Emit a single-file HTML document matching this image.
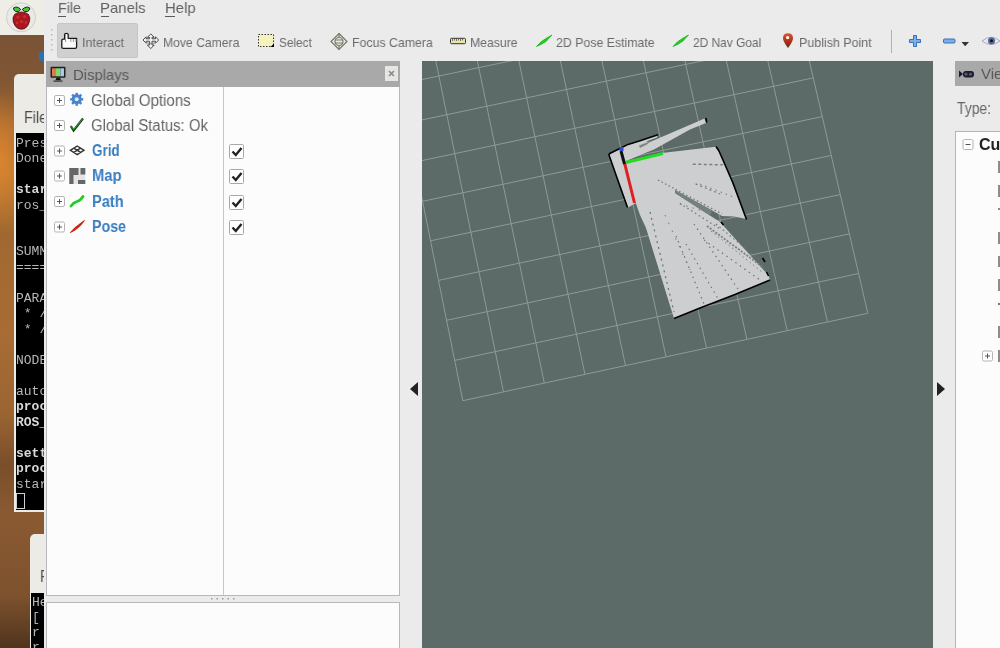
<!DOCTYPE html>
<html><head><meta charset="utf-8"><style>
*{margin:0;padding:0;box-sizing:border-box}
html,body{width:1000px;height:648px;overflow:hidden;background:#ececea;font-family:"Liberation Sans",sans-serif}
.a{position:absolute}
.t{position:absolute;white-space:nowrap;line-height:1;transform-origin:0 0;will-change:transform}
.m{position:absolute;will-change:transform;left:16px;font-family:"Liberation Mono",monospace;font-size:13px;line-height:14px;color:#b8b8b8;white-space:nowrap}
</style></head><body>
<!-- desktop -->
<div class="a" style="left:0;top:0;width:44px;height:35px;background:#eeede6"></div>
<div class="a" style="left:0;top:35px;width:44px;height:613px;background:linear-gradient(180deg,#7a5436 0px,#805634 45px,#a86a30 95px,#b87630 140px,#a06830 200px,#a86c34 300px,#9a6432 380px,#7a4e2a 430px,#8a5a32 480px,#7e522e 560px,#50341e 613px)"></div>
<div class="a" style="left:0;top:90px;width:30px;height:140px;background:radial-gradient(ellipse at 0% 50%,rgba(235,140,45,.7),rgba(235,140,45,0) 70%)"></div>
<svg class="a" style="left:0;top:0" width="44" height="35">
<circle cx="21" cy="17.3" r="14.5" fill="#e9e9e5" stroke="#cfcfd4" stroke-width="1"/>
<path d="M13.5 8 Q17 5.5 20.8 9.5 Q19 12.5 15.5 11.5 Q13.5 10.5 13.5 8 Z" fill="#4cc040" stroke="#1a3010" stroke-width="1"/>
<path d="M29.8 8 Q26.5 5.5 22.2 9.5 Q24 12.5 27.5 11.5 Q29.8 10.5 29.8 8 Z" fill="#4cc040" stroke="#1a3010" stroke-width="1"/>
<path d="M21.5 12 Q26 12 28.5 14.5 Q30.5 17.5 29.5 21.5 Q28 26.5 25 28.5 Q21.5 30 18 28.5 Q14.5 26.5 13.2 21.5 Q12.5 17 14.5 14.5 Q17 12 21.5 12 Z" fill="#a81820" stroke="#5a0a10" stroke-width="0.8"/>
<g fill="#d02a2a"><circle cx="18" cy="17" r="1.6"/><circle cx="24.5" cy="16.5" r="1.6"/><circle cx="21.5" cy="21.5" r="1.6"/><circle cx="17" cy="23" r="1.3"/><circle cx="26" cy="22.5" r="1.3"/></g>
</svg>
<div class="a" style="left:39px;top:52px;width:5px;height:9px;background:#2a70b8;border-radius:2px 0 0 2px"></div>
<!-- terminal 1 -->
<div class="a" style="left:14px;top:74px;width:30px;height:438px;background:#ecebe6;border-radius:5px 0 0 0"></div>
<div class="t" style="left:24.4px;top:108.5px;font-size:16.5px;color:#4a4a4a;transform:scaleX(0.8649);">File</div>
<div class="a" style="left:16px;top:133px;width:28px;height:377px;background:#000;overflow:hidden">
</div>
<div class="m" style="top:136.5px;">Pres</div>
<div class="m" style="top:152.0px;">Done</div>
<div class="m" style="top:183.0px;font-weight:bold;color:#d8d8d8;">star</div>
<div class="m" style="top:198.5px;">ros_</div>
<div class="m" style="top:245.0px;">SUMM</div>
<div class="m" style="top:260.5px;">====</div>
<div class="m" style="top:291.5px;">PARA</div>
<div class="m" style="top:307.0px;">&nbsp;*&nbsp;/</div>
<div class="m" style="top:322.5px;">&nbsp;*&nbsp;/</div>
<div class="m" style="top:353.5px;">NODE</div>
<div class="m" style="top:384.5px;">auto</div>
<div class="m" style="top:400.0px;font-weight:bold;color:#d8d8d8;">proc</div>
<div class="m" style="top:415.5px;font-weight:bold;color:#d8d8d8;">ROS_</div>
<div class="m" style="top:446.5px;font-weight:bold;color:#d8d8d8;">sett</div>
<div class="m" style="top:462.0px;font-weight:bold;color:#d8d8d8;">proc</div>
<div class="m" style="top:477.5px;">star</div>
<div class="a" style="left:16px;top:493px;width:9px;height:16px;border:1px solid #d0d0d0"></div>
<!-- terminal 2 -->
<div class="a" style="left:30px;top:534px;width:14px;height:114px;background:#ecebe6;border-radius:5px 0 0 0"></div>
<div class="t" style="left:39.8px;top:568.2px;font-size:16.5px;color:#4a4a4a;transform:scaleX(0.8434);">F</div>
<div class="a" style="left:31px;top:593px;width:13px;height:55px;background:#000"></div>
<div class="m" style="left:32px;top:596px">He</div>
<div class="m" style="left:32px;top:611px;color:#b0b0c0">[</div>
<div class="m" style="left:32px;top:626px">r</div>
<div class="m" style="left:32px;top:641px">r</div>

<!-- rviz window -->
<div class="a" style="left:44px;top:0;width:956px;height:648px;background:#ebebeb"></div>
<!-- underlines -->
<div class="a" style="left:58px;top:15.5px;width:8px;height:1px;background:#5a5a5a"></div>
<div class="a" style="left:100.5px;top:15.5px;width:8px;height:1px;background:#5a5a5a"></div>
<div class="a" style="left:165px;top:15.5px;width:10px;height:1px;background:#5a5a5a"></div>
<!-- toolbar grip -->
<svg class="a" style="left:48px;top:26px" width="8" height="30"><g fill="#b8b8c0"><rect x="3" y="3" width="1.5" height="1.5"/><rect x="3" y="8" width="1.5" height="1.5"/><rect x="3" y="13" width="1.5" height="1.5"/><rect x="3" y="18" width="1.5" height="1.5"/><rect x="3" y="23" width="1.5" height="1.5"/></g></svg>
<div class="a" style="left:57px;top:23px;width:81px;height:35px;background:#d0d0d1;border:1px solid #c6c6c8;border-radius:2px"></div>
<div class="a" style="left:891px;top:30px;width:1px;height:23px;background:#b0b0b0"></div>

<!-- displays panel -->
<div class="a" style="left:46px;top:61px;width:354px;height:26px;background:#a9a9a9"></div>
<div class="a" style="left:385px;top:66px;width:13px;height:15px;background:#e4e4e0"></div>
<div class="a" style="left:46px;top:87px;width:354px;height:509px;background:#fcfcfc;border:1px solid #b8b8bc;border-top:none"></div>
<div class="a" style="left:223px;top:87px;width:1px;height:508px;background:#c8c8c8"></div>
<div class="a" style="left:46px;top:602px;width:354px;height:46px;background:#fcfcfc;border:1px solid #b8b8bc;border-bottom:none"></div>

<!-- 3D view -->
<svg class="a" style="left:422px;top:61px" width="511" height="587">
<rect width="511" height="587" fill="#5c6a68"/>
<path d="M40.8 339.7L445.8 252.3M32.6 299.4L436.6 212.5M24.6 259.3L427.4 172.9M16.5 219.4L418.3 133.6M8.5 179.8L409.2 94.5M0.6 140.3L400.2 55.6M-7.3 101.1L391.3 16.9M-15.2 62.1L382.4 -21.6M-23.0 23.4L373.5 -59.9M-30.8 -15.2L364.7 -97.9M-38.5 -53.5L355.9 -135.7M40.8 339.7L-38.5 -53.5M81.5 330.9L1.2 -61.8M122.3 322.1L40.8 -70.1M162.9 313.3L80.4 -78.3M203.5 304.6L119.9 -86.6M244.0 295.8L159.4 -94.8M284.5 287.1L198.8 -103.0M324.9 278.4L238.2 -111.2M365.2 269.6L277.5 -119.4M405.5 260.9L316.7 -127.6M445.8 252.3L355.9 -135.7" stroke="#8f9998" stroke-width="1" fill="none"/>
<polygon points="186.8,93.0 198.8,87.0 206.0,83.4 218.0,79.8 236.0,73.8 235.0,76.5 224.0,80.5 228.0,81.0 278.0,59.5 282.4,57.4 284.0,62.0 268.0,68.5 232.0,88.5 222.0,92.5 203.6,100.2 204.0,102.0 214.0,142.0 206.0,146.5 194.0,114.0 188.0,96.0" fill="#cdcecf"/>
<polygon points="217.0,84.5 229.0,80.0 225.0,83.5 218.0,87.0" fill="#7d8785"/>
<polygon points="203.6,100.2 242.0,91.8 293.6,85.8 297.0,89.0 324.5,158.0 312.0,155.5 300.0,155.0 253.0,129.0 253.0,132.0 298.0,161.0 346.3,214.2 348.0,219.0 252.0,257.5 224.0,167.0 218.0,154.0 213.0,140.0" fill="#cdcecf"/>
<polygon points="253.0,129.0 290.0,149.5 288.0,154.5 253.0,132.0" fill="#76807e"/>
<line x1="285.0" y1="165.0" x2="342.0" y2="207.0" stroke="#7a8280" stroke-width="1.8" stroke-dasharray="2 1.5"/>
<line x1="289.0" y1="170.0" x2="340.0" y2="211.0" stroke="#7a8280" stroke-width="1" stroke-dasharray="1.5 3"/>
<line x1="236.0" y1="119.0" x2="300.0" y2="153.0" stroke="#6f7775" stroke-width="1.2" stroke-dasharray="1.5 2.5"/>
<line x1="270.8" y1="103.2" x2="300.8" y2="103.8" stroke="#7a8280" stroke-width="1.5" stroke-dasharray="3 2.5"/>
<line x1="278.0" y1="123.0" x2="314.0" y2="137.0" stroke="#6f7775" stroke-width="1" stroke-dasharray="1.5 4"/>
<line x1="228.0" y1="151.0" x2="252.0" y2="251.0" stroke="#6f7775" stroke-width="1.3" stroke-dasharray="2 4"/>
<line x1="254.0" y1="175.0" x2="282.0" y2="243.0" stroke="#6f7775" stroke-width="1.2" stroke-dasharray="1.5 4"/>
<line x1="264.0" y1="183.0" x2="298.0" y2="241.0" stroke="#6f7775" stroke-width="1.2" stroke-dasharray="1.5 4"/>
<line x1="272.0" y1="163.0" x2="318.0" y2="231.0" stroke="#6f7775" stroke-width="1.2" stroke-dasharray="1.5 4"/>
<line x1="282.0" y1="179.0" x2="338.0" y2="219.0" stroke="#6f7775" stroke-width="1.2" stroke-dasharray="1.5 4"/>
<line x1="294.0" y1="163.0" x2="342.0" y2="203.0" stroke="#6f7775" stroke-width="1.2" stroke-dasharray="1.5 3"/>
<line x1="258.0" y1="143.0" x2="310.0" y2="159.0" stroke="#6f7775" stroke-width="1" stroke-dasharray="1.5 5"/>
<line x1="243.0" y1="154.0" x2="268.0" y2="209.0" stroke="#6f7775" stroke-width="1" stroke-dasharray="1.5 7"/>
<line x1="273.6" y1="122.9" x2="298.0" y2="133.0" stroke="#6f7775" stroke-width="1.2" stroke-dasharray="2 3"/>
<line x1="257.8" y1="142.3" x2="298.0" y2="168.0" stroke="#6f7775" stroke-width="1.2" stroke-dasharray="1.5 3"/>
<polyline points="205.5,146.5 194.0,114.0 187.7,96.0 186.8,93.0" fill="none" stroke="#000" stroke-width="1.6" stroke-linejoin="round"/>
<polyline points="186.8,93.0 198.8,87.0 206.0,83.4 218.0,79.8 236.0,73.8" fill="none" stroke="#000" stroke-width="1.6" stroke-linejoin="round"/>
<polyline points="294.0,85.5 297.0,90.0 311.0,122.0 324.5,158.5" fill="none" stroke="#000" stroke-width="1.6" stroke-linejoin="round"/>
<polyline points="252.0,257.5 278.0,247.0 313.0,233.5 348.0,219.0" fill="none" stroke="#000" stroke-width="1.6" stroke-linejoin="round"/>
<polyline points="283.8,57.0 284.8,61.5" fill="none" stroke="#000" stroke-width="1.6" stroke-linejoin="round"/>
<polyline points="299.0,161.0 301.5,164.0" fill="none" stroke="#000" stroke-width="1.6" stroke-linejoin="round"/>
<polyline points="340.5,197.0 343.0,201.0" fill="none" stroke="#000" stroke-width="1.6" stroke-linejoin="round"/>
<polyline points="344.5,211.0 346.5,215.0" fill="none" stroke="#000" stroke-width="1.6" stroke-linejoin="round"/>
<line x1="202.5" y1="102" x2="212.5" y2="142" stroke="#e02020" stroke-width="3"/>
<line x1="204" y1="101.5" x2="241" y2="92.5" stroke="#22dd22" stroke-width="3"/>
<line x1="199" y1="90" x2="202.5" y2="103" stroke="#111" stroke-width="3"/>
<rect x="197.5" y="86" width="4" height="4" fill="#2a50d0"/>
</svg>

<!-- views panel -->
<div class="a" style="left:955px;top:61px;width:45px;height:25px;background:#a9a9a9"></div>
<div class="a" style="left:955px;top:131px;width:45px;height:517px;background:#fcfcfc;border-left:1px solid #b4b4b4;border-top:1px solid #b4b4b4"></div>

<div class="t" style="left:58.3px;top:0.3px;font-size:15px;color:#626262;transform:scaleX(0.9521);">File</div>
<div class="t" style="left:100.4px;top:0.3px;font-size:15px;color:#626262;transform:scaleX(0.9943);">Panels</div>
<div class="t" style="left:165.0px;top:0.3px;font-size:15px;color:#626262;transform:scaleX(0.9921);">Help</div>
<div class="t" style="left:81.8px;top:35.7px;font-size:13px;color:#6a6a6a;transform:scaleX(0.9686);">Interact</div>
<div class="t" style="left:163.0px;top:35.7px;font-size:13px;color:#6a6a6a;transform:scaleX(0.9356);">Move Camera</div>
<div class="t" style="left:278.6px;top:35.7px;font-size:13px;color:#6a6a6a;transform:scaleX(0.9076);">Select</div>
<div class="t" style="left:351.6px;top:35.7px;font-size:13px;color:#6a6a6a;transform:scaleX(0.9476);">Focus Camera</div>
<div class="t" style="left:470.4px;top:35.7px;font-size:13px;color:#6a6a6a;transform:scaleX(0.9408);">Measure</div>
<div class="t" style="left:556.0px;top:35.7px;font-size:13px;color:#6a6a6a;transform:scaleX(0.9475);">2D Pose Estimate</div>
<div class="t" style="left:693.0px;top:35.7px;font-size:13px;color:#6a6a6a;transform:scaleX(0.9175);">2D Nav Goal</div>
<div class="t" style="left:799.4px;top:35.7px;font-size:13px;color:#6a6a6a;transform:scaleX(0.9564);">Publish Point</div>
<div class="t" style="left:72.5px;top:66.5px;font-size:15px;color:#585858;transform:scaleX(0.9881);">Displays</div>
<div class="t" style="left:91.3px;top:92.9px;font-size:16px;color:#656565;transform:scaleX(0.9421);">Global Options</div>
<div class="t" style="left:91.3px;top:117.9px;font-size:16px;color:#656565;transform:scaleX(0.9323);">Global Status: Ok</div>
<div class="t" style="left:91.7px;top:143.4px;font-size:16px;color:#3a7cc0;font-weight:bold;transform:scaleX(0.8414);">Grid</div>
<div class="t" style="left:91.7px;top:168.4px;font-size:16px;color:#3a7cc0;font-weight:bold;transform:scaleX(0.9245);">Map</div>
<div class="t" style="left:91.7px;top:193.9px;font-size:16px;color:#3a7cc0;font-weight:bold;transform:scaleX(0.9110);">Path</div>
<div class="t" style="left:91.7px;top:219.3px;font-size:16px;color:#3a7cc0;font-weight:bold;transform:scaleX(0.8885);">Pose</div>
<div class="t" style="left:981.2px;top:66.4px;font-size:15px;color:#585858;transform:scaleX(1.0000);">Views</div>
<div class="t" style="left:957.0px;top:100.8px;font-size:16px;color:#656565;transform:scaleX(0.8680);">Type:</div>
<div class="t" style="left:978.9px;top:136.9px;font-size:16px;color:#222;font-weight:bold;transform:scaleX(1.0000);">Current View</div>
<div class="a" style="left:998px;top:161px;width:2px;height:12px;background:#8c8c8c"></div>
<div class="a" style="left:998px;top:185px;width:2px;height:12px;background:#8c8c8c"></div>
<div class="a" style="left:998px;top:208px;width:2px;height:1.5px;background:#8c8c8c"></div>
<div class="a" style="left:998px;top:232px;width:2px;height:11.5px;background:#8c8c8c"></div>
<div class="a" style="left:998px;top:255.5px;width:2px;height:11.5px;background:#8c8c8c"></div>
<div class="a" style="left:998px;top:279px;width:2px;height:11.5px;background:#8c8c8c"></div>
<div class="a" style="left:998px;top:302.5px;width:2px;height:2px;background:#777"></div>
<div class="a" style="left:998px;top:326px;width:2px;height:11.5px;background:#8c8c8c"></div>
<div class="a" style="left:998px;top:350px;width:2px;height:11.5px;background:#8c8c8c"></div>

<!-- ICONS -->
<svg class="a" style="left:0;top:0" width="1000" height="648">
<!-- hand -->
<path d="M64.6 39.2 L64.6 34.6 Q64.6 33.3 66.4 33.3 Q68.2 33.3 68.2 34.6 L68.2 38.3 L76.6 38.3 L76.6 47 Q76.6 48.4 75.2 48.4 L63.2 48.4 Q61.8 48.4 61.8 47 L61.8 40.6 Q61.8 39.2 63.2 39.2 Z" fill="#fafafa" stroke="#1a1a1a" stroke-width="1.3" stroke-linejoin="round"/>
<path d="M65.5 35 V42 M70.8 39 V42 M73.4 39 V42 M75.9 39 V42" stroke="#9a9a9a" stroke-width="1"/>
<!-- move camera -->
<path d="M150.8 34 L154.2 37.3 L152 37.3 L152 38.8 L155.5 38.8 L155.5 36.8 L158.6 40 L155.5 43.2 L155.5 41.2 L152 41.2 L152 45 L154.2 45 L150.8 48.6 L147.4 45 L149.6 45 L149.6 41.2 L146.1 41.2 L146.1 43.2 L143 40 L146.1 36.8 L146.1 38.8 L149.6 38.8 L149.6 37.3 L147.4 37.3 Z" fill="#f6f6f6" stroke="#4a4a4a" stroke-width="1" stroke-linejoin="miter"/>
<path d="M145.5 42.5 Q150.8 45 156 42.5" stroke="#777" stroke-width="0.9" fill="none"/>
<!-- select -->
<rect x="258.5" y="34.5" width="15" height="12" fill="#f6f2bc" stroke="#333" stroke-width="1" stroke-dasharray="1.5 1.5"/>
<path d="M274 43.5 L274 47 L270.5 47 Z" fill="#000"/>
<!-- focus camera -->
<g stroke="#777766" stroke-width="1.2" fill="none">
<path d="M339 33.5 L347 41.5 L339 49.5 L331 41.5 Z"/>
<circle cx="339" cy="41.5" r="4"/>
<path d="M335 40 H343 M335 43 H343 M339 33.5 V37 M339 46 V49.5"/>
</g>
<!-- measure -->
<rect x="450.5" y="38.3" width="15" height="5.4" rx="1" fill="#ece4a8" stroke="#333" stroke-width="1"/>
<path d="M452.5 38.5 V41 M454.5 38.5 V40.5 M456.5 38.5 V41 M458.5 38.5 V40.5 M460.5 38.5 V41 M462.5 38.5 V40.5" stroke="#555" stroke-width="0.8"/>
<!-- pose arrows -->
<path d="M536.5 46.5 Q541 41 546 38.5 Q549 36.5 552 35 Q549 38 546.5 41 Q542 44.5 536.5 46.5 Z" fill="#22cc22" stroke="#1ab41a" stroke-width="0.8"/>
<path d="M673 46.5 Q677.5 41 682.5 38.5 Q685.5 36.5 688.5 35 Q685.5 38 683 41 Q678.5 44.5 673 46.5 Z" fill="#22cc22" stroke="#1ab41a" stroke-width="0.8"/>
<!-- pin -->
<defs><linearGradient id="pg" x1="0" y1="0" x2="0" y2="1"><stop offset="0" stop-color="#d85a30"/><stop offset="0.5" stop-color="#b83020"/><stop offset="1" stop-color="#5a3010"/></linearGradient></defs>
<path d="M788 48 Q783 41.5 783 38.2 Q783 33.2 788 33.2 Q793 33.2 793 38.2 Q793 41.5 788 48 Z" fill="url(#pg)"/>
<circle cx="787.6" cy="37.6" r="1.6" fill="#fff"/>
<!-- zoom plus/minus -->
<path d="M913.5 35.5 H916.5 V39.5 H920.5 V42.5 H916.5 V46.5 H913.5 V42.5 H909.5 V39.5 H913.5 Z" fill="#7ab0e8" stroke="#3a70b8" stroke-width="1"/>
<rect x="943.5" y="39" width="11.5" height="4" rx="1" fill="#7ab0e8" stroke="#3a70b8" stroke-width="1"/>
<path d="M961.5 42 H969 L965.2 46.2 Z" fill="#333"/>
<!-- eye -->
<path d="M982 41 Q991 33.5 1000 41 Q991 48 982 41 Z" fill="#e8e8f0" stroke="#9a9aa8" stroke-width="0.8"/>
<circle cx="991.5" cy="40.8" r="3.6" fill="#5a6a9a"/>
<circle cx="991.5" cy="40.8" r="1.5" fill="#111"/>
<!-- monitor -->
<rect x="50.5" y="66.8" width="15" height="11" rx="1" fill="#222"/>
<rect x="52" y="68.3" width="4" height="8" fill="#e07850"/>
<rect x="56" y="68.3" width="4.5" height="8" fill="#80d870"/>
<rect x="60.5" y="68.3" width="3.5" height="8" fill="#a8c8f0"/>
<path d="M56.5 77.8 H60 L61 80.2 H55.5 Z" fill="#111"/>
<rect x="53.5" y="80.5" width="9" height="1.2" fill="#333"/>
<!-- close btn -->
<rect x="385" y="66" width="13" height="15" fill="#e6e6e2"/>
<path d="M389 71 L394 76 M394 71 L389 76" stroke="#888" stroke-width="1.6"/>
<!-- tree plus boxes -->
<g fill="#fff" stroke="#b4b4b4" stroke-width="1">
<rect x="54.5" y="95.5" width="10" height="10" rx="1.5"/>
<rect x="54.5" y="120.5" width="10" height="10" rx="1.5"/>
<rect x="54.5" y="146" width="10" height="10" rx="1.5"/>
<rect x="54.5" y="171" width="10" height="10" rx="1.5"/>
<rect x="54.5" y="196.5" width="10" height="10" rx="1.5"/>
<rect x="54.5" y="222" width="10" height="10" rx="1.5"/>
<rect x="982.5" y="351" width="10" height="10" rx="1.5"/>
<rect x="963" y="139.5" width="10" height="10" rx="1.5"/>
</g>
<g stroke="#555" stroke-width="1">
<path d="M57 100.5 H62 M59.5 98 V103"/>
<path d="M57 125.5 H62 M59.5 123 V128"/>
<path d="M57 151 H62 M59.5 148.5 V153.5"/>
<path d="M57 176 H62 M59.5 173.5 V178.5"/>
<path d="M57 201.5 H62 M59.5 199 V204"/>
<path d="M57 227 H62 M59.5 224.5 V229.5"/>
<path d="M985 356 H990 M987.5 353.5 V358.5"/>
<path d="M965.5 144.5 H970.5"/>
</g>
<!-- gear -->
<g transform="translate(76.7 99.3)">
<circle r="5" fill="#4a82cc"/>
<g fill="#4a82cc"><rect x="-1.2" y="-6.5" width="2.4" height="13"/><rect x="-1.2" y="-6.5" width="2.4" height="13" transform="rotate(45)"/><rect x="-1.2" y="-6.5" width="2.4" height="13" transform="rotate(90)"/><rect x="-1.2" y="-6.5" width="2.4" height="13" transform="rotate(135)"/></g>
<circle r="2" fill="#dfe8f6"/>
</g>
<!-- check -->
<path d="M70.8 126 L73.6 130.5 L83 118.5" stroke="#1a3a1a" stroke-width="2.2" fill="none"/>
<path d="M71.3 126.3 L73.6 129.6 L82.5 119" stroke="#2cc02c" stroke-width="0.9" fill="none"/>
<!-- grid icon -->
<g stroke="#333" stroke-width="1.4" fill="none">
<path d="M77.2 146 L84 150.3 L77.2 154.6 L70.4 150.3 Z M73.8 148.15 L80.6 152.45 M80.6 148.15 L73.8 152.45"/>
</g>
<!-- map icon -->
<rect x="69.3" y="168" width="16" height="16" fill="#e4e4e8"/>
<path d="M69.3 168 H78.5 V175 H73.5 V184 H69.3 Z" fill="#666"/>
<rect x="80.5" y="168" width="4.8" height="6.5" fill="#666"/>
<rect x="78" y="180" width="7.3" height="4" fill="#666"/>
<!-- path icon -->
<path d="M71 206 Q73.5 202.5 77 201.5 Q80.5 200.5 83 196.5" stroke="#22cc22" stroke-width="2.8" fill="none" stroke-linecap="round"/>
<!-- pose icon -->
<path d="M70.3 232.6 Q75 227 79 224.5 Q82 222 84.5 220.5 Q82 224 79.5 226.5 Q75.5 230.5 70.3 232.6 Z" fill="#d82010" stroke="#c01808" stroke-width="0.8"/>
<!-- checkboxes -->
<g fill="#fff" stroke="#a8a8a8" stroke-width="1">
<rect x="229.5" y="144.5" width="14" height="14" rx="1"/>
<rect x="229.5" y="169.5" width="14" height="14" rx="1"/>
<rect x="229.5" y="195.5" width="14" height="14" rx="1"/>
<rect x="229.5" y="220.5" width="14" height="14" rx="1"/>
</g>
<g stroke="#222" stroke-width="2.4" fill="none" stroke-linejoin="miter">
<path d="M232.5 151.5 L235.8 155 L241.5 148"/>
<path d="M232.5 176.5 L235.8 180 L241.5 173"/>
<path d="M232.5 202.5 L235.8 206 L241.5 199"/>
<path d="M232.5 227.5 L235.8 231 L241.5 224"/>
</g>
<!-- splitter triangles -->
<path d="M418 382 V396 L410 389 Z" fill="#222"/>
<path d="M937 382 V396 L945 389 Z" fill="#222"/>
<!-- splitter dots -->
<g fill="#999"><rect x="211" y="598" width="1.5" height="1.5"/><rect x="216.5" y="598" width="1.5" height="1.5"/><rect x="222" y="598" width="1.5" height="1.5"/><rect x="227.5" y="598" width="1.5" height="1.5"/><rect x="233" y="598" width="1.5" height="1.5"/></g>
<!-- views camera icon -->
<path d="M959 70.5 L963 74 L959 77.5 Z" fill="#1a1a3a"/>
<rect x="963" y="71" width="11" height="6.5" rx="3" fill="#1a1a3a"/>
<circle cx="966" cy="74.2" r="1.6" fill="#5a5a4a"/><circle cx="970.5" cy="74.2" r="1.6" fill="#5a5a4a"/>
<!-- raspberry leaves detail -->
</svg>

</body></html>
